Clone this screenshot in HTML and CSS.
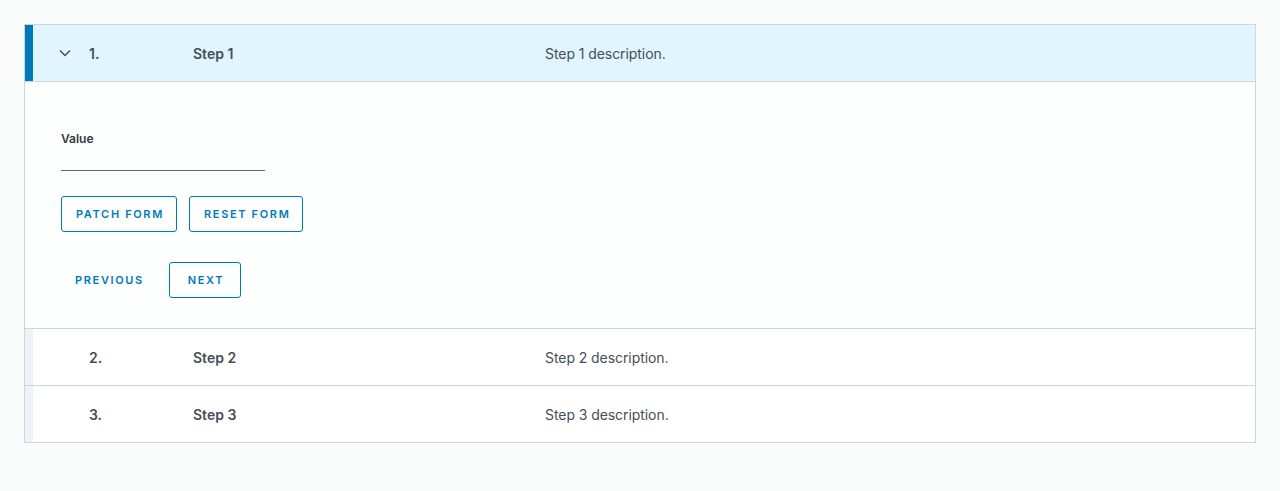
FILE: index.html
```html
<!DOCTYPE html>
<html>
<head>
<meta charset="utf-8">
<link rel="stylesheet" href="styles.css">
</head>
<body>
<div class="stepper">
  <div class="step active">
    <div class="step-header">
      <span class="bar"></span>
      <span class="chev"><svg width="12" height="8" viewBox="0 0 12 8"><path d="M1 1.5 L6 6.5 L11 1.5" fill="none" stroke="#454f57" stroke-width="1.5"/></svg></span>
      <span class="num">1.</span>
      <span class="title">Step 1</span>
      <span class="desc">Step 1 description.</span>
    </div>
    <div class="step-content">
      <label class="field-label">Value</label>
      <div class="field-line"></div>
      <div class="btn-row">
        <button class="btn outline">Patch Form</button>
        <button class="btn outline">Reset Form</button>
      </div>
      <div class="btn-row nav">
        <button class="btn link">Previous</button>
        <button class="btn outline">Next</button>
      </div>
    </div>
  </div>
  <div class="step">
    <div class="step-header">
      <span class="bar"></span>
      <span class="chev"></span>
      <span class="num">2.</span>
      <span class="title">Step 2</span>
      <span class="desc">Step 2 description.</span>
    </div>
  </div>
  <div class="step last">
    <div class="step-header">
      <span class="bar"></span>
      <span class="chev"></span>
      <span class="num">3.</span>
      <span class="title">Step 3</span>
      <span class="desc">Step 3 description.</span>
    </div>
  </div>
</div>
</body>
</html>
```

FILE: styles.css
```css
* { box-sizing: border-box; }
body {
  margin: 0;
  padding: 24px 24px 0 24px;
  background: #fafcfc;
  font-family: "Inter", "Lato", sans-serif;
  color: #454f57;
}
.stepper {
  width: 1232px;
  border: 1px solid #ccd6dc;
  background: #ffffff;
}
.step-header {
  display: flex;
  align-items: center;
  height: 57px;
  border-bottom: 1px solid #ccd6dc;
  font-size: 14px;
}
.step.last .step-header { border-bottom: none; height: 56px; }
.bar {
  width: 8px;
  align-self: stretch;
  background: #eef3f7;
}
.active .step-header { background: #e0f5fd; }
.active .bar { background: #0079b8; }
.chev {
  width: 56px;
  padding-left: 26px;
  display: flex;
  align-items: center;
}
.num {
  width: 104px;
  font-weight: 600;
}
.title {
  width: 352px;
  font-weight: 600;
}
.desc { font-weight: 400; letter-spacing: -0.005em; }
.step-content {
  background: #fdfefe;
  border-bottom: 1px solid #ccd6dc;
  padding: 50px 36px 30px 36px;
  height: 247px;
}
.field-label {
  display: block;
  font-size: 12px;
  font-weight: 600;
  color: #313a42;
  line-height: 14px;
}
.field-line {
  width: 204px;
  height: 1px;
  background: #5b6b75;
  margin-top: 24px;
}
.btn-row {
  display: flex;
  gap: 12px;
  margin-top: 25px;
}
.btn-row.nav { margin-top: 30px; gap: 0; }
.btn {
  height: 36px;
  min-width: 72px;
  font-family: "Inter", "Lato", sans-serif;
  font-size: 11px;
  font-weight: 600;
  letter-spacing: 0.15em;
  text-transform: uppercase;
  color: #0079b8;
  background: transparent;
  border: 1px solid #0079b8;
  border-radius: 3px;
  padding: 0 12px 0 14px;
  cursor: pointer;
}
.btn.link {
  border-color: transparent;
  width: 108px;
  padding-left: 13px;
  text-align: left;
}
```
